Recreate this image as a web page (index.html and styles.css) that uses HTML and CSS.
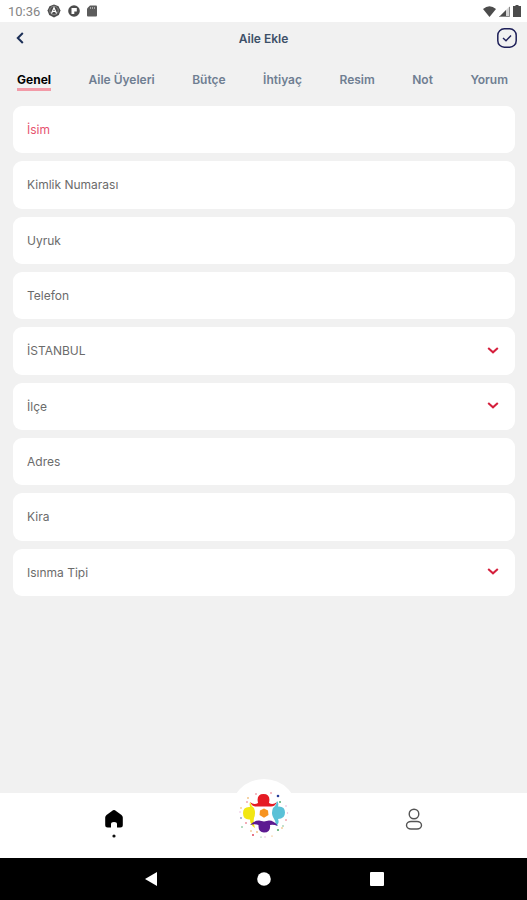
FILE: index.html
```html
<!DOCTYPE html>
<html lang="tr">
<head>
<meta charset="utf-8">
<meta name="viewport" content="width=device-width, initial-scale=1">
<title>Aile Ekle</title>
<link rel="stylesheet" href="styles.css">
</head>
<body>
<div class="status">
  <span class="clock">10:36</span>
  <svg class="status-icon" width="14" height="14" viewBox="0 0 14 14" aria-hidden="true"><path d="M7 .5l4.500 1.700 2 4.300-1.700 4.500L7 13.500l-4.800-2.500L.5 6.500l2-4.300z" fill="#4c4c4c"/><circle cx="7" cy="6.500" r="4.300" fill="none" stroke="#888"/><path d="M4.500 9.500L7 3.800l2.500 5.700M5.300 7.500h3.400" fill="none" stroke="#fff" stroke-width="1.200"/></svg>
  <svg class="status-icon" width="12" height="12" viewBox="0 0 12 12" aria-hidden="true"><circle cx="6" cy="6" r="5.800" fill="#4c4c4c"/><path d="M3.500 3h5.300v3.500H6.300V9H3.500z" fill="#fff"/></svg>
  <svg class="status-icon" width="10" height="12" viewBox="0 0 10 12" aria-hidden="true"><path d="M3 .5h6q1 0 1 1v9q0 1-1 1H1q-1 0-1-1v-7z" fill="#5c5c5c"/><path d="M3.500 2v2M5.500 2v2M7.500 2v2" stroke="#bbb" stroke-width=".8"/></svg>
  <span class="spacer"></span>
  <svg width="13" height="11" viewBox="0 0 13 11" aria-hidden="true"><path d="M0 3Q6.500-2.500 13 3L6.500 11z" fill="#4c4c4c"/></svg>
  <svg width="11" height="11" viewBox="0 0 11 11" aria-hidden="true"><path d="M11 0v11H0z" fill="#d4d4d4"/><path d="M7 4v7H0z" fill="#4c4c4c"/><path d="M10.500 1v9.500H1" fill="none" stroke="#888"/></svg>
  <svg width="8" height="12" viewBox="0 0 8 12" aria-hidden="true"><path d="M2.500 0h3v1H8v11H0V1h2.500z" fill="#4c4c4c"/></svg>
</div>
<header class="bar">
  <button class="icon-button" type="button" aria-label="Geri"><svg width="8" height="12" viewBox="0 0 8 12"><path d="M6.800 1L1.800 6l5 5" fill="none" stroke="#1c2f57" stroke-width="2"/></svg></button>
  <h1 class="title">Aile Ekle</h1>
  <button class="icon-button" type="button" aria-label="Kaydet"><svg width="20" height="20" viewBox="0 0 20 20"><rect x=".8" y=".8" width="18.400" height="18.400" rx="6.500" fill="none" stroke="#1d1f58" stroke-width="1.500"/><path d="M6 10l3 2.800 5-5.300" fill="none" stroke="#1d1f58" stroke-width="1.400"/></svg></button>
</header>
<nav class="tabs">
  <a class="tab active" href="#genel">Genel</a>
  <a class="tab" href="#uyeler">Aile Üyeleri</a>
  <a class="tab" href="#butce">Bütçe</a>
  <a class="tab" href="#ihtiyac">İhtiyaç</a>
  <a class="tab" href="#resim">Resim</a>
  <a class="tab" href="#not">Not</a>
  <a class="tab" href="#yorum">Yorum</a>
</nav>
<main class="content">
  <form class="fields">
    <input class="field required" type="text" placeholder="İsim" aria-label="İsim">
    <input class="field" type="text" placeholder="Kimlik Numarası" aria-label="Kimlik Numarası">
    <input class="field" type="text" placeholder="Uyruk" aria-label="Uyruk">
    <input class="field" type="tel" placeholder="Telefon" aria-label="Telefon">
    <div class="picker">
      <select class="field" aria-label="İl"><option>İSTANBUL</option></select>
      <svg class="chevron" width="12" height="8" viewBox="0 0 12 8" aria-hidden="true"><path d="M1.200 1L6 5.300 10.800 1"/></svg>
    </div>
    <div class="picker">
      <select class="field" aria-label="İlçe"><option>İlçe</option></select>
      <svg class="chevron" width="12" height="8" viewBox="0 0 12 8" aria-hidden="true"><path d="M1.200 1L6 5.300 10.800 1"/></svg>
    </div>
    <input class="field" type="text" placeholder="Adres" aria-label="Adres">
    <input class="field" type="text" placeholder="Kira" aria-label="Kira">
    <div class="picker">
      <select class="field" aria-label="Isınma Tipi"><option>Isınma Tipi</option></select>
      <svg class="chevron" width="12" height="8" viewBox="0 0 12 8" aria-hidden="true"><path d="M1.200 1L6 5.300 10.800 1"/></svg>
    </div>
  </form>
</main>
<nav class="bottom">
  <a class="bottom-item" href="#home" aria-label="Ana sayfa"><svg width="18" height="28" viewBox="0 0 18 28"><path d="M9 0q1 0 2 1l5.500 4q1.300 1 1.300 2.500V15q0 2.500-2.500 2.500H12V14q0-2-3-2t-3 2v3.500H2.700Q.2 17.500.2 15V7.500Q.2 6 1.500 5L7 1q1-1 2-1z" fill="#000"/><circle cx="9" cy="26" r="1.600" fill="#111"/></svg></a>
  <a class="bottom-item logo" href="#menu" aria-label="Menü"><svg width="50" height="50" viewBox="0 0 50 50">
    <path d="M11 14Q15 17.500 19 15Q17 6 24.500 6Q32 6 30 15Q34 17.500 38 14Q36 18.500 32 18.500H17Q13 18.500 11 14z" fill="#e51b23"/>
    <path d="M11 14Q12 18 15 20Q17 25 15 30Q14 34 16 40Q11 37 11 31.500Q4 32 4 25Q4 18.500 11 19Q10 16 11 14z" fill="#f2e713"/>
    <path d="M38 13Q37 18 34 20Q32 25 34 29Q37 33 37 38Q41 35 39 31Q46 31 46 24.500Q46 18 39 18.500Q40 15 38 13z" fill="#5bc1d7"/>
    <path d="M11 37Q15 32.500 20 32.500L25 33.500L30 32.500Q35 32.500 39 38Q34 36 31 37Q32 44.500 25 44.500Q19 44.500 19.500 37Q16 35.500 11 37z" fill="#5d1b91"/>
    <path d="M25 20.500l4 2 .5 4.500-4.500 2.800-4.500-2.800.5-4.500z" fill="#f79420"/>
    <g fill="#e0485c"><circle cx="17" cy="6" r=".7"/><circle cx="32" cy="5" r=".7"/><circle cx="8" cy="14" r=".7"/><circle cx="7" cy="35" r=".8"/><circle cx="14" cy="47" r="1"/><circle cx="47" cy="32" r=".7"/></g>
    <g fill="#e79b37"><circle cx="9" cy="10" r=".8"/><circle cx="2" cy="20" r=".7"/><circle cx="12" cy="43" r=".7"/><circle cx="18" cy="44" r=".8"/><circle cx="43" cy="40" r=".7"/><circle cx="33" cy="48" r=".6"/></g>
    <g fill="#58ad72"><circle cx="41" cy="14" r="1"/><circle cx="39" cy="42" r="1.100"/><circle cx="3" cy="39" r=".8"/><circle cx="44" cy="38" r=".7"/><circle cx="22" cy="49" r=".6"/></g>
    <g fill="#263d99"><circle cx="39" cy="8" r="1.300"/><circle cx="2" cy="30" r=".7"/></g>
    <g fill="#e5b0d6"><circle cx="47" cy="18" r=".8"/><circle cx="48.500" cy="25" r=".7"/><circle cx="26" cy="49" r=".7"/><circle cx="1" cy="24" r=".7"/></g>
  </svg></a>
  <a class="bottom-item" href="#profile" aria-label="Profil"><svg width="18" height="28" viewBox="0 0 18 28"><g fill="none" stroke="#555" stroke-width="1.400"><circle cx="9" cy="4" r="4.800"/><rect x="1.500" y="11.500" width="15" height="7.500" rx="4.500"/></g></svg></a>
</nav>
<footer class="system">
  <button type="button" aria-label="Sistem geri"><svg width="14" height="16" viewBox="0 0 14 16"><path d="M13 1v14L1 8z" fill="#fff"/></svg></button>
  <button type="button" aria-label="Sistem ana ekran"><svg width="14" height="14" viewBox="0 0 14 14"><circle cx="7" cy="7" r="6.800" fill="#fff"/></svg></button>
  <button type="button" aria-label="Son uygulamalar"><svg width="14" height="14" viewBox="0 0 14 14"><rect width="14" height="14" rx="1" fill="#fff"/></svg></button>
</footer>
</body>
</html>
```
FILE: styles.css
```css
* { box-sizing: border-box; }
body {
  margin: 0;
  min-height: 100vh;
  display: flex;
  flex-direction: column;
  background: #f1f1f1;
  font-family: Inter, "Liberation Sans", sans-serif;
  font-size: 12px;
}
svg { display: block; overflow: visible; }
a { color: inherit; text-decoration: none; }
button { padding: 0; border: 0; background: none; }
.status {
  display: flex;
  align-items: center;
  gap: 3px;
  height: 22px;
  padding: 0 6px 0 8px;
  background: #fff;
}
.clock { color: #858585; font-family: Roboto, sans-serif; font-size: 13px; }
.status-icon { margin-left: 4px; }
.spacer { flex: 1; }
.bar {
  display: grid;
  grid-template-columns: 32px 1fr 32px;
  align-items: center;
  height: 32px;
  padding: 0 4px;
}
.icon-button { display: grid; place-items: center; height: 32px; }
.title {
  margin: 0;
  color: #3d5068;
  font-size: 12px;
  font-weight: 600;
  text-align: center;
}
.tabs {
  display: flex;
  justify-content: space-between;
  padding: 19px 19px 15px 17px;
}
.tab {
  padding-bottom: 1px;
  border-bottom: 3px solid transparent;
  color: #6f7e92;
  font-size: 12px;
  font-weight: 600;
  line-height: 14px;
}
.active { border-color: #f29aa7; color: #000; font-weight: 700; }
.content { flex: 1; padding: 0 12px 0 13px; }
.fields {
  display: grid;
  grid-auto-rows: 1fr;
  gap: 8px;
  min-height: 490px;
}
.field {
  width: 100%;
  height: 100%;
  margin: 0;
  padding: 0 14px;
  border: 0;
  border-radius: 9px;
  background: #fff;
  color: #6b6b6b;
  font: 12px Inter, "Liberation Sans", sans-serif;
  appearance: none;
}
.field::placeholder { color: #6b6b6b; opacity: 1; }
.required::placeholder { color: #e65370; }
.picker { display: grid; align-items: center; }
.picker > * { grid-area: 1 / 1; }
.chevron { justify-self: end; margin-right: 16px; pointer-events: none; }
.chevron path { fill: none; stroke: #d51f3c; stroke-width: 2; }
.bottom {
  display: grid;
  grid-template-columns: repeat(3, 150px);
  justify-content: center;
  height: 65px;
  background: #fff;
}
.bottom-item { display: grid; place-items: center; padding-bottom: 4px; }
.logo {
  justify-self: center;
  width: 68px;
  height: 68px;
  margin-top: -14px;
  padding: 0;
  border-radius: 50%;
  background: #fff;
}
.system {
  display: grid;
  grid-template-columns: repeat(3, 113px);
  justify-content: center;
  height: 42px;
  background: #000;
}
.system button { display: grid; place-items: center; }
```
